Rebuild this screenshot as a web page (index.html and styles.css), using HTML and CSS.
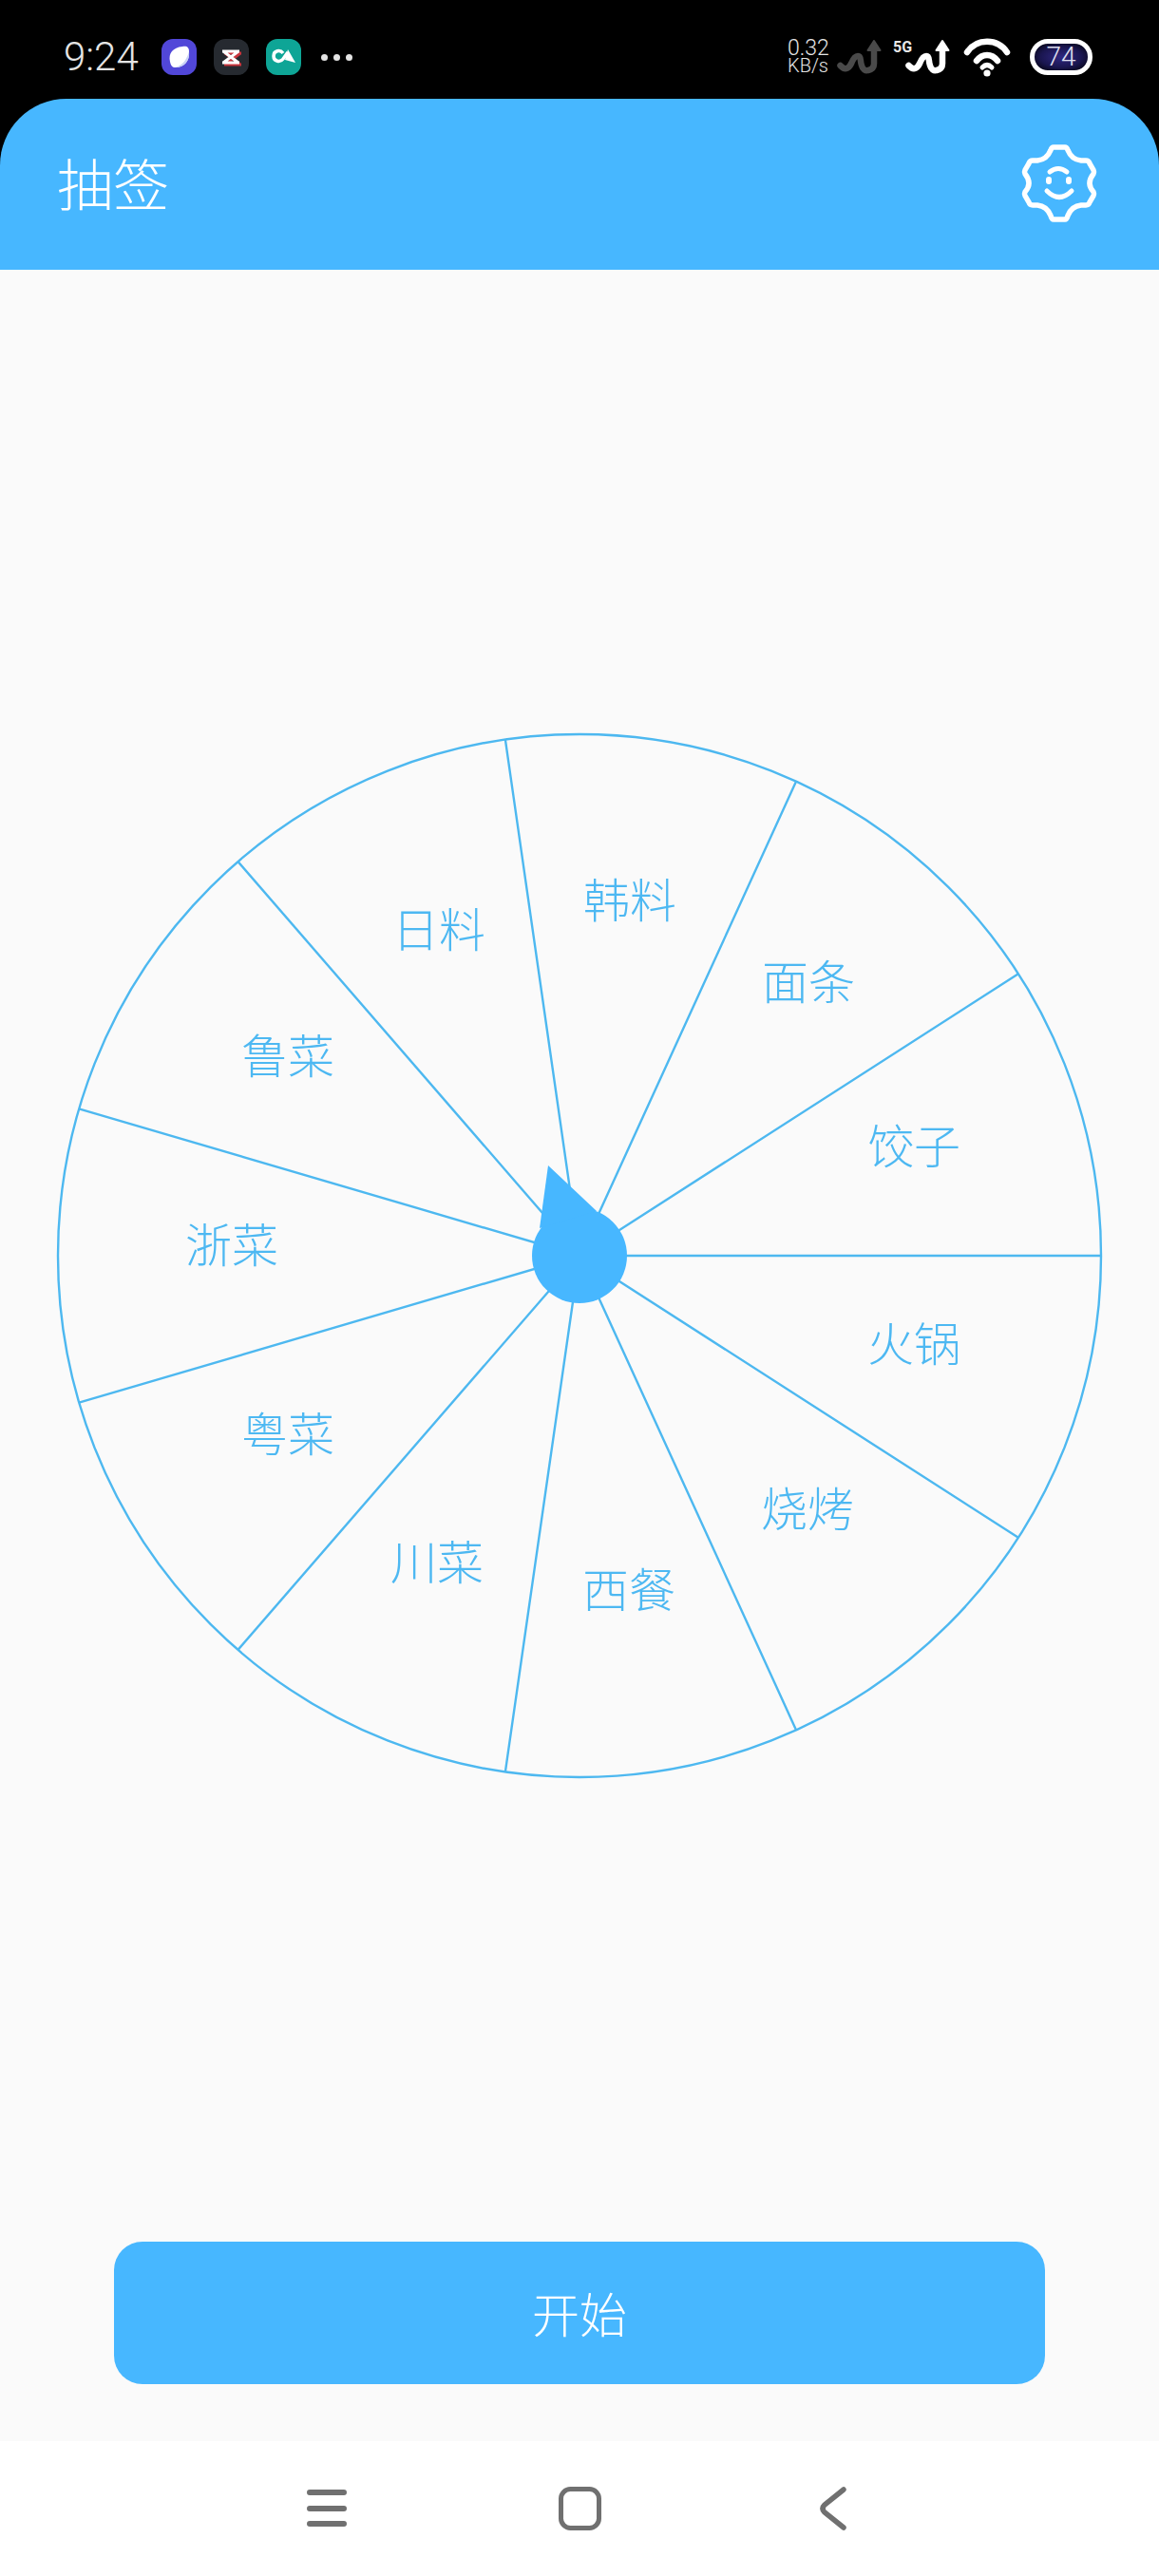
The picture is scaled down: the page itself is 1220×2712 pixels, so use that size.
FILE: index.html
```html
<!DOCTYPE html>
<html lang="zh-CN">
<head>
    <meta charset="UTF-8">
    <meta name="viewport" content="width=device-width, initial-scale=1.0">
    <title>抽签</title>
    <link rel="stylesheet" href="styles.css">
</head>
<body>
    <div class="status-bar">
        <div class="status-left">
            <span class="time">9:24</span>
            <svg class="app-icon" viewBox="0 0 37 38">
                <rect width="37" height="38" rx="12" fill="#5147d8"/>
                <path d="M9 24C7 15 12 9 22 8C27 7 29 9 29 13C30 23 24 30 15 30C11 30 10 28 9 24Z" fill="#fff"/>
                <path d="M29 13C30 23 24 30 15 30C23 27 27 21 29 13Z" fill="#c9d2f5"/>
            </svg>
            <svg class="app-icon" viewBox="0 0 37 38">
                <rect width="37" height="38" rx="12" fill="#262a30"/>
                <path d="M10 14H28M10 26H28M11 14L27 26M27 14L11 26" stroke="#c9353d" stroke-width="3" fill="none" transform="translate(1 1)"/>
                <path d="M9 13H27M9 25H27M10 13L26 25M26 13L10 25" stroke="#fff" stroke-width="3" fill="none"/>
            </svg>
            <svg class="app-icon" viewBox="0 0 37 38">
                <rect width="37" height="38" rx="12" fill="#0ea596"/>
                <path d="M18 15C15 11 8 12 8 18C8 24 15 25 18 21L23 14" stroke="#fff" stroke-width="3.5" fill="none"/>
                <path d="M23 11L31 25L20 22Z" fill="#fff"/>
            </svg>
            <div class="dots"><i></i><i></i><i></i></div>
        </div>
        <div class="status-right">
            <div class="speed"><span>0.32</span><span class="speed-unit">KB/s</span></div>
            <svg class="signal" viewBox="0 0 47 36">
                <path d="M3.5 27C8 32 12 31 15 25C17 20 19 17 22 17C26 17 24 22 26 27C27 31 30 33 33 32C37 31 39 29 39 25V10" stroke="#4a4a4a" stroke-width="6.5" stroke-linecap="round" fill="none"/>
                <path d="M39 1L45.5 11H32.5Z" fill="#4a4a4a" stroke="#4a4a4a" stroke-width="2" stroke-linejoin="round"/>
            </svg>
            <svg class="signal-5g" viewBox="0 -6 60 48">
                <text class="net-type" x="0" y="13">5G</text>
                <path d="M16.5 27C21 32 25 31 28 25C30 20 32 17 35 17C39 17 37 22 39 27C40 31 43 33 46 32C50 31 52 29 52 25V10" stroke="#fff" stroke-width="6.5" stroke-linecap="round" fill="none"/>
                <path d="M52 1L58.5 11H45.5Z" fill="#fff" stroke="#fff" stroke-width="2" stroke-linejoin="round"/>
            </svg>
            <svg class="wifi" viewBox="0 0 50 44">
                <path d="M4 17C14 2 36 2 46 17M14 26C20 18 30 18 36 26" stroke="#fff" stroke-width="6.5" stroke-linecap="round" fill="none"/>
                <path d="M20 33Q25 28 30 33" stroke="#fff" stroke-width="5" stroke-linecap="round" fill="none"/>
                <circle cx="25" cy="39" r="3.6" fill="#fff"/>
            </svg>
            <div class="battery">74</div>
        </div>
    </div>

    <div class="app-bar">
        <span class="app-title">抽签</span>
        <svg class="settings" viewBox="14 12 82 86">
            <path d="M49 16H61Q63 16 64 19Q68 29 78 30H83Q86 30 87 33L91 40Q92 42 91 44Q83 54 91 63Q92 65 91 67L87 74Q86 77 83 77H78Q68 78 64 88Q63 92 61 92H49Q47 92 46 88Q42 78 32 77H27Q24 77 23 74L19 67Q18 65 19 63Q27 54 19 44Q18 42 19 40L23 33Q24 30 27 30H32Q42 29 46 19Q47 16 49 16Z" stroke="#fff" stroke-width="5.5" fill="none"/>
            <path d="M45 42Q54 35 63 42" stroke="#fff" stroke-width="5" stroke-linecap="round" fill="none"/>
            <path d="M42 62Q55 75 68 62" stroke="#fff" stroke-width="5" stroke-linecap="round" fill="none"/>
            <path d="M44 50V52M65 50V52" stroke="#fff" stroke-width="6" stroke-linecap="round" fill="none"/>
        </svg>
    </div>

    <main class="content">
        <svg class="wheel" viewBox="-560 -560 1120 1120">
            <circle class="wheel-line" r="549"/>
            <path class="wheel-line" d="M0 0L549 0M0 0L461.9 -296.8M0 0L461.9 296.8M0 0L228.1 -499.4M0 0L228.1 499.4M0 0L-78.1 -543.4M0 0L-78.1 543.4M0 0L-359.5 -414.9M0 0L-359.5 414.9M0 0L-526.8 -154.7M0 0L-526.8 154.7"/>
            <text class="wheel-label" x="352" y="-119">饺子</text>
            <text class="wheel-label" x="352" y="89">火锅</text>
            <text class="wheel-label" x="241" y="-292">面条</text>
            <text class="wheel-label" x="240" y="263">烧烤</text>
            <text class="wheel-label" x="53" y="-378">韩料</text>
            <text class="wheel-label" x="52" y="348">西餐</text>
            <text class="wheel-label" x="-148" y="-347">日料</text>
            <text class="wheel-label" x="-150" y="319">川菜</text>
            <text class="wheel-label" x="-307" y="-214">鲁菜</text>
            <text class="wheel-label" x="-307" y="184">粤菜</text>
            <text class="wheel-label" x="-366" y="-15">浙菜</text>
            <circle class="pointer" r="50"/>
            <path class="pointer" d="M-33 -95L18 -47L-42 -29Z"/>
        </svg>
        <button class="start-btn">开始</button>
    </main>

    <nav class="nav-bar">
        <svg class="nav-menu" viewBox="0 0 42 40">
            <path d="M3 3H39M3 20H39M3 36H39" stroke="#707070" stroke-width="6" stroke-linecap="round"/>
        </svg>
        <svg class="nav-home" viewBox="0 0 45 46">
            <rect x="2.5" y="2.5" width="40" height="41" rx="10" stroke="#707070" stroke-width="5" fill="none"/>
        </svg>
        <svg class="nav-back" viewBox="0 0 28 46">
            <path d="M25 3L5 19Q1 23 5 27L25 43" stroke="#707070" stroke-width="5.5" stroke-linecap="round" fill="none"/>
        </svg>
    </nav>
</body>
</html>
```

FILE: styles.css
```css
* {
    box-sizing: border-box;
}
body {
    margin: 0;
    width: 1220px;
    height: 2712px;
    display: flex;
    flex-direction: column;
    font-family: "Noto Sans CJK SC", "Noto Sans", sans-serif;
    background-color: #000;
}

/* status bar */
.status-bar {
    height: 104px;
    padding: 16px 70px 0 67px;
    display: flex;
    justify-content: space-between;
    align-items: center;
    background-color: #000;
    color: #e4e4e4;
    font-family: Roboto, sans-serif;
    font-weight: 300;
}
.status-left,
.status-right {
    display: flex;
    align-items: center;
}
.time {
    width: 103px;
    font-size: 42px;
    line-height: 1;
}
.app-icon {
    width: 37px;
    height: 38px;
    margin-right: 18px;
}
.dots {
    display: flex;
    gap: 6px;
    margin-left: 3px;
}
.dots i {
    width: 7px;
    height: 7px;
    border-radius: 50%;
    background-color: #e4e4e4;
}
.speed {
    width: 52px;
    display: flex;
    flex-direction: column;
    font-size: 23px;
    line-height: 19px;
}
.speed-unit {
    font-size: 20px;
}
.signal {
    width: 47px;
    height: 36px;
    margin-right: 12px;
}
.signal-5g {
    width: 60px;
    height: 48px;
    margin-right: 14px;
}
.net-type {
    font-family: Roboto, sans-serif;
    font-size: 16px;
    font-weight: 700;
    fill: #e8e8e8;
}
.wifi {
    width: 50px;
    height: 44px;
    margin-right: 20px;
}
.battery {
    width: 66px;
    height: 38px;
    border: 5px solid #fff;
    border-radius: 19px;
    display: flex;
    justify-content: center;
    align-items: center;
    background: radial-gradient(ellipse at center, #2f2780 0%, #1a1650 55%, #000 100%);
    font-size: 28px;
    line-height: 1;
    color: #e0e0f0;
}

/* app bar */
.app-bar {
    height: 180px;
    padding: 0 64px 0 60px;
    display: flex;
    justify-content: space-between;
    align-items: center;
    background-color: #47b7ff;
    border-radius: 70px 70px 0 0;
}
.app-title {
    margin-bottom: 6px;
    font-size: 59px;
    font-weight: 300;
    color: #fff;
}
.settings {
    width: 82px;
    height: 86px;
}

/* wheel + button */
.content {
    height: 2286px;
    padding-top: 478px;
    padding-bottom: 60px;
    display: flex;
    flex-direction: column;
    align-items: center;
    background-color: #fafafa;
}
.wheel {
    width: 1120px;
    height: 1120px;
}
.wheel-line {
    fill: none;
    stroke: #4db8f0;
    stroke-width: 2.4;
}
.wheel-label {
    font-size: 49px;
    font-weight: 300;
    fill: #4db8f2;
    text-anchor: middle;
    dominant-baseline: central;
}
.pointer {
    fill: #47b7ff;
}
.start-btn {
    width: 980px;
    height: 150px;
    margin-top: auto;
    padding-bottom: 4px;
    border: none;
    border-radius: 30px;
    background-color: #47b7ff;
    color: #fff;
    font-family: inherit;
    font-size: 50px;
    font-weight: 300;
}

/* navigation bar */
.nav-bar {
    height: 142px;
    display: flex;
    justify-content: center;
    align-items: center;
    background-color: #fff;
}
.nav-menu {
    width: 42px;
    height: 40px;
}
.nav-home {
    width: 45px;
    height: 46px;
    margin-left: 223px;
}
.nav-back {
    width: 28px;
    height: 46px;
    margin-left: 230px;
    margin-right: 7px;
}
```
